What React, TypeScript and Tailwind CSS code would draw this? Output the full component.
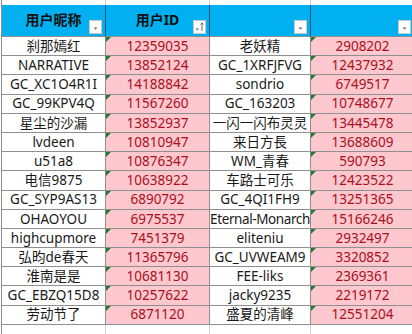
import React from "react"

const rows: [string, string, string, string][] = [
	["刹那嫣红", "12359035", "老妖精", "2908202"],
	["NARRATIVE", "13852124", "GC_1XRFJFVG", "12437932"],
	["GC_XC1O4R1I", "14188842", "sondrio", "6749517"],
	["GC_99KPV4Q", "11567260", "GC_163203", "10748677"],
	["星尘的沙漏", "13852937", "一闪一闪布灵灵", "13445478"],
	["lvdeen", "10810947", "来日方長", "13688609"],
	["u51a8", "10876347", "WM_青春", "590793"],
	["电信9875", "10638922", "车路士可乐", "12423522"],
	["GC_SYP9AS13", "6890792", "GC_4QI1FH9", "13251365"],
	["OHAOYOU", "6975537", "Eternal-Monarch", "15166246"],
	["highcupmore", "7451379", "eliteniu", "2932497"],
	["弘昀de春天", "11365796", "GC_UVWEAM9", "3320852"],
	["淮南是是", "10681130", "FEE-liks", "2369361"],
	["GC_EBZQ15D8", "10257622", "jacky9235", "2219172"],
	["劳动节了", "6871120", "盛夏的清峰", "12551204"],
]

const FilterButton = ({ sorted }: { sorted?: boolean }) => (
	<div className="absolute right-[3px] bottom-[2px] w-[13px] h-[14px] bg-white border border-[#c9c9c9]">
		<svg width="11" height="12" viewBox="0 0 11 12" className="block">
			{sorted ? (
				<>
					<path d="M1.5 7.5 L5 7.5 L3.25 9.5 Z" fill="#6b6b6b" />
					<path d="M8 2 L8 10 M6.5 3.5 L8 2 L9.5 3.5" stroke="#6b6b6b" strokeWidth="1" fill="none" />
				</>
			) : (
				<path d="M3.5 6.5 L7.5 6.5 L5.5 8.8 Z" fill="#6b6b6b" />
			)}
		</svg>
	</div>
)

const Flag = () => (
	<div className="absolute left-0 top-0 w-0 h-0 border-t-[5px] border-t-[#217a33] border-r-[5px] border-r-transparent" />
)

const font = "font-['Noto_Sans','Noto_Sans_CJK_SC',sans-serif]"

export default function App() {
	return (
		<div className={`w-[412px] h-[334px] overflow-hidden bg-white ${font}`}>
			<div className="ml-px grid grid-cols-[104px_104px_101px_104px] w-max border-l border-[#8f8f8f]">
				{/* strip of the row above */}
				<div className="h-[5px] border-r border-[#d6d6d6]" />
				<div className="h-[5px] border-r border-[#d6d6d6]" />
				<div className="h-[5px] border-r border-[#d6d6d6]" />
				<div className="h-[5px] border-r border-[#d6d6d6]" />

				{/* header */}
				{["用户昵称", "用户ID", "", ""].map((h, i) => (
					<div
						key={i}
						className="relative h-[32px] bg-[#00b0f0] border-r border-r-[#27506e] border-b border-b-[#8f8f8f] flex justify-center pt-[7px] text-[14px] font-bold leading-[16px] text-[#111]"
					>
						{h}
						<FilterButton sorted={i === 1} />
					</div>
				))}

				{/* body */}
				{rows.map((r, ri) =>
					r.map((c, ci) => {
						const num = ci % 2 === 1
						return (
							<div
								key={`${ri}-${ci}`}
								className={`relative h-[19.2px] border-r border-b border-[#8f8f8f] flex items-center justify-center overflow-hidden whitespace-nowrap text-[13.5px] leading-none pt-px ${
									num ? "bg-[#ffc7ce] text-[#a8101c]" : "bg-white text-[#1a1a1a]"
								} ${c.length > 13 ? "tracking-[-0.4px]" : ""}`}
							>
								{num && <Flag />}
								{c}
							</div>
						)
					})
				)}

				{/* empty row below */}
				<div className="h-[19px] border-r border-[#d6d6d6]" />
				<div className="h-[19px] border-r border-[#d6d6d6]" />
				<div className="h-[19px] border-r border-[#d6d6d6]" />
				<div className="h-[19px] border-r border-[#d6d6d6]" />
			</div>
		</div>
	)
}
